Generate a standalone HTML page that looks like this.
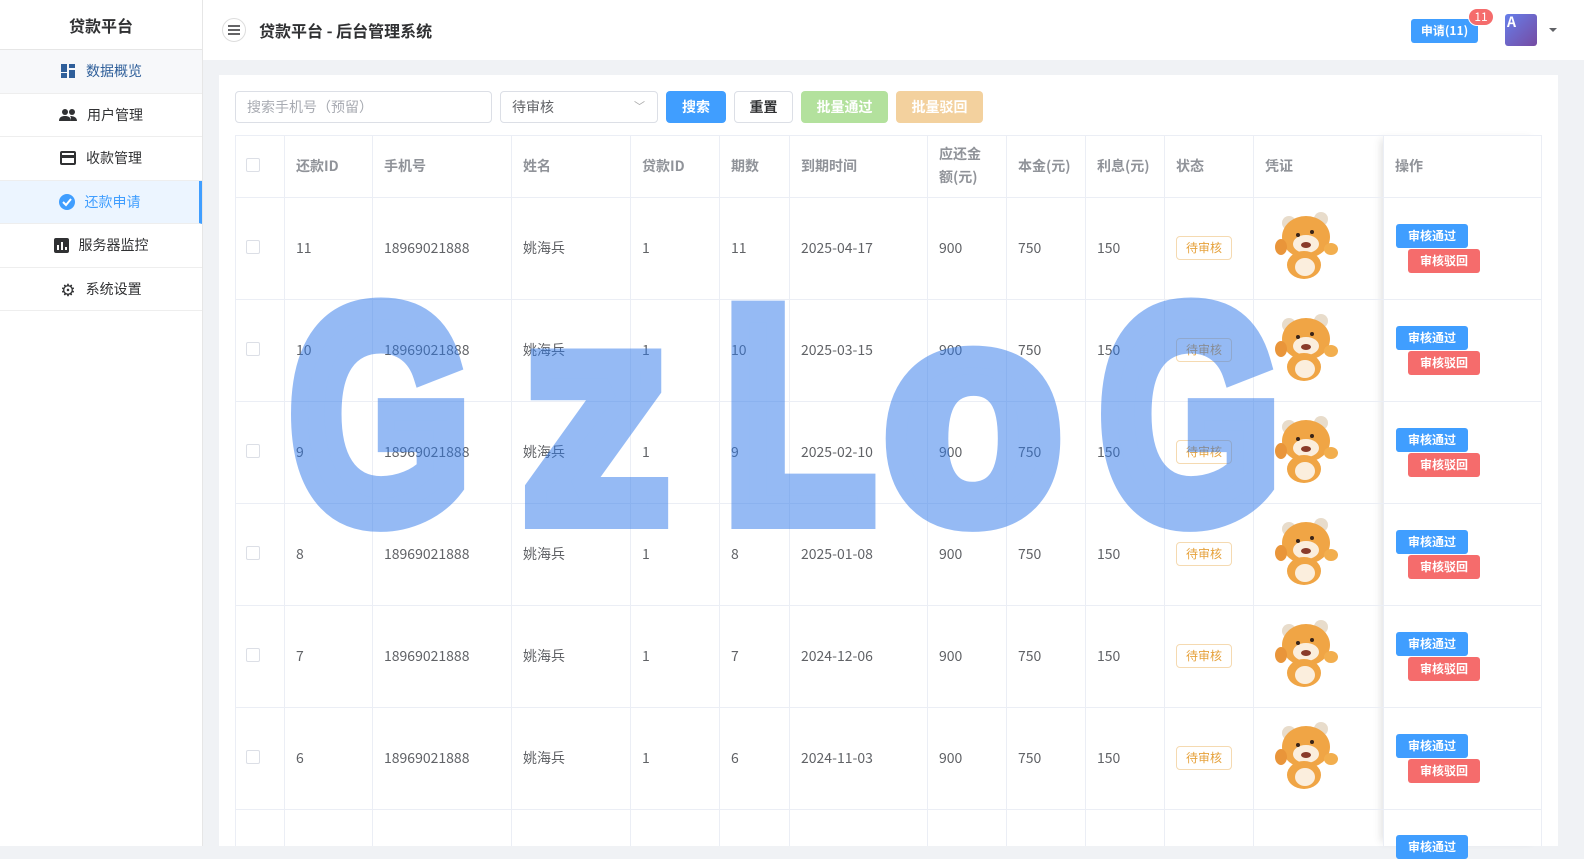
<!DOCTYPE html>
<html><head><meta charset="utf-8"><style>
*{box-sizing:border-box;margin:0;padding:0}
body{width:1584px;height:846px;overflow:hidden;font-family:"Noto Sans CJK SC","Liberation Sans",sans-serif;background:#f0f2f5;position:relative;color:#606266}
.abs{position:absolute}
#side{left:0;top:0;width:203px;height:846px;background:#fff;border-right:1px solid #e6e6e6}
#side .logo{height:50px;border-bottom:1px solid #e6e6e6;text-align:center;line-height:50px;font-size:16px;font-weight:bold;color:#303133}
.mi{height:43.5px;border-bottom:1px solid #eee;display:flex;align-items:center;justify-content:center;font-size:14px;color:#303133;gap:10px}
.mi.act{background:#ecf5ff;color:#409eff;border-right:3px solid #409eff}
#head{left:203px;top:0;width:1381px;height:60px;background:#fff}
#card{left:219px;top:75px;width:1339px;height:771px;background:#fff}
.inp{position:absolute;top:91px;height:32px;border:1px solid #dcdfe6;border-radius:4px;font-size:14px;line-height:30px;padding-left:11px}
.btn{position:absolute;top:91px;height:32px;border-radius:4px;font-size:14px;line-height:32px;text-align:center;color:#fff;font-weight:bold}
.cell{position:absolute;font-size:14px;display:flex;align-items:center;padding-left:12px}
.hl{position:absolute;background:#ebeef5}
.tag{border:1px solid #f5dab1;color:#e6a23c;font-size:12px;border-radius:4px;height:24px;line-height:22px;padding:0 9px;background:#fff}
.ok,.no{position:absolute;width:72px;height:24px;border-radius:3px;color:#fff;font-size:12px;font-weight:bold;text-align:center;line-height:24px}
.ok{background:#409eff}.no{background:#f56c6c}
.cb{position:absolute;width:14px;height:14px;border:1px solid #dcdfe6;border-radius:2px;background:#fff}
</style></head><body>
<div id="side" class="abs">
<div class="logo">贷款平台</div>
<div class="mi" style="background:#f7f8fa"><svg width="16" height="16"><rect x="1" y="1" width="6" height="8" fill="#2f5f9a"/><rect x="9" y="1" width="6" height="4" fill="#2f5f9a"/><rect x="1" y="10" width="6" height="5" fill="#2f5f9a"/><rect x="9" y="7" width="6" height="8" fill="#2f5f9a"/></svg><span style="color:#2f5f9a">数据概览</span></div>
<div class="mi"><svg width="18" height="14"><circle cx="6" cy="4" r="3" fill="#303133"/><circle cx="13" cy="4" r="3" fill="#303133"/><path d="M0 13c0-4 3-5 6-5s6 1 6 5zM12 13c0-3 0-4-1-5 3 0 7 1 7 5z" fill="#303133"/></svg>用户管理</div>
<div class="mi"><svg width="16" height="14"><rect x="1" y="1" width="14" height="12" rx="1" fill="none" stroke="#303133" stroke-width="2"/><rect x="1" y="4" width="14" height="3" fill="#303133"/></svg>收款管理</div>
<div class="mi act"><svg width="16" height="16"><circle cx="8" cy="8" r="8" fill="#409eff"/><path d="M4 8l3 3 5-6" stroke="#fff" stroke-width="2" fill="none"/></svg>还款申请</div>
<div class="mi"><svg width="15" height="15"><rect width="15" height="15" rx="2" fill="#303133"/><rect x="3" y="7" width="2" height="5" fill="#fff"/><rect x="7" y="4" width="2" height="8" fill="#fff"/><rect x="11" y="9" width="2" height="3" fill="#fff"/></svg>服务器监控</div>
<div class="mi"><span style="font-size:17px;color:#303133">⚙</span>系统设置</div>
</div>
<div id="head" class="abs">
<div class="abs" style="left:19px;top:18px;width:24px;height:24px;border:1px solid #ddd;border-radius:50%"><svg width="24" height="24" style="position:absolute;left:-1px;top:-1px"><path d="M6 8h12M6 12h12M6 16h12" stroke="#303133" stroke-width="1.5"/></svg></div>
<div class="abs" style="left:56px;top:18px;font-size:16px;font-weight:bold;color:#303133">贷款平台 - 后台管理系统</div>
<div class="abs" style="left:1208px;top:19px;width:67px;height:24px;background:#409eff;border-radius:3px;color:#fff;font-size:12px;line-height:24px;text-align:center;font-weight:bold">申请(11)</div>
<div class="abs" style="left:1265px;top:8px;width:26px;height:18px;background:#f56c6c;border-radius:9px;border:1px solid #fff;color:#fff;font-size:12px;line-height:16px;text-align:center">11</div>
<div class="abs" style="left:1302px;top:14px;width:32px;height:32px;border-radius:3px;background:linear-gradient(135deg,#667eea,#764ba2);color:#fff;font-size:14px;font-weight:bold;padding-left:2px;line-height:16px">A</div>
<div class="abs" style="left:1346px;top:28px;border:4px solid transparent;border-top:4px solid #606266"></div>
</div>
<div id="card" class="abs"></div>
<div class="inp" style="left:235px;width:257px;color:#a8abb2">搜索手机号（预留）</div>
<div class="inp" style="left:500px;width:158px;color:#606266">待审核<span style="position:absolute;right:12px;top:-1px;color:#aaa;font-size:11px">﹀</span></div>
<div class="btn" style="left:666px;width:60px;background:#409eff">搜索</div>
<div class="btn" style="left:734px;width:59px;background:#fff;border:1px solid #dcdfe6;color:#303133;line-height:30px">重置</div>
<div class="btn" style="left:801px;width:87px;background:#b3e19d">批量通过</div>
<div class="btn" style="left:896px;width:87px;background:#f3d19e">批量驳回</div>
<div id="tbl"></div>
<script>
var cols=[235,284,372,511,630,719,789,927,1006,1085,1164,1253,1383,1541];
var h='';
h+='<div class="abs" style="left:1383px;top:135px;width:158px;height:711px;background:#fff;box-shadow:-6px 0 8px -4px rgba(0,0,0,.12)"></div>';
h+='<div class="hl" style="left:235px;top:135px;width:1306px;height:1px"></div>';
cols.forEach(function(x){h+='<div class="hl" style="left:'+x+'px;top:135px;width:1px;height:711px"></div>';});
var heads=['','还款ID','手机号','姓名','贷款ID','期数','到期时间','应还金<br>额(元)','本金(元)','利息(元)','状态','凭证','操作'];
for(var i=1;i<heads.length;i++){h+='<div class="cell" style="left:'+cols[i]+'px;top:135px;width:'+(cols[i+1]-cols[i])+'px;height:62px;font-weight:bold;color:#909399;line-height:23px">'+heads[i]+'</div>';}
h+='<div class="cb" style="left:246px;top:158px"></div>';
var ids=[11,10,9,8,7,6],dates=['2025-04-17','2025-03-15','2025-02-10','2025-01-08','2024-12-06','2024-11-03'];
for(var r=0;r<7;r++){var y=197+r*102;
h+='<div class="hl" style="left:235px;top:'+y+'px;width:1306px;height:1px"></div>';
if(r==6)break;
h+='<div class="cb" style="left:246px;top:'+(y+43)+'px"></div>';
var v=[ids[r],'18969021888','姚海兵','1',ids[r],dates[r],'900','750','150'];
for(var c=0;c<v.length;c++){h+='<div class="cell" style="left:'+cols[c+1]+'px;top:'+y+'px;width:'+(cols[c+2]-cols[c+1])+'px;height:102px;color:#606266">'+v[c]+'</div>';}
h+='<div class="cell" style="left:1164px;top:'+y+'px;height:102px"><span class="tag">待审核</span></div>';
h+='<svg class="abs" style="left:1271px;top:'+(y+10)+'px" width="70" height="75"><circle cx="18" cy="16" r="7" fill="#e8dccb"/><circle cx="50" cy="12" r="7" fill="#e8dccb"/><ellipse cx="35" cy="30" rx="24" ry="21" fill="#f0a545"/><ellipse cx="35" cy="37" rx="13" ry="9" fill="#fbeedd"/><ellipse cx="33" cy="58" rx="17" ry="14" fill="#f0a545"/><ellipse cx="34" cy="60" rx="10" ry="9" fill="#fbeedd"/><ellipse cx="60" cy="42" rx="7" ry="6" fill="#f2ae4e"/><ellipse cx="10" cy="40" rx="6" ry="8" fill="#e9953a"/><circle cx="27" cy="28" r="2" fill="#3a2418"/><circle cx="41" cy="25" r="2" fill="#3a2418"/><ellipse cx="35" cy="38" rx="5" ry="3" fill="#8a3b2a"/></svg>';
h+='<div class="ok" style="left:1396px;top:'+(y+27)+'px">审核通过</div><div class="no" style="left:1408px;top:'+(y+52)+'px">审核驳回</div>';
}
h+='<div class="ok" style="left:1396px;top:835px">审核通过</div>';
document.getElementById('tbl').innerHTML=h;
</script>
<svg class="abs" style="left:0;top:0" width="1584" height="846">
<g opacity="0.5" fill="#2d78eb" stroke="#2d78eb" stroke-width="22" stroke-linejoin="miter" stroke-miterlimit="2" font-family="Liberation Sans" font-weight="bold" font-size="300">
<text x="290" y="518" textLength="180" lengthAdjust="spacingAndGlyphs">G</text>
<text x="524" y="518" textLength="144" lengthAdjust="spacingAndGlyphs">z</text>
<text x="724" y="518" textLength="150" lengthAdjust="spacingAndGlyphs">L</text>
<text x="885" y="518" textLength="176" lengthAdjust="spacingAndGlyphs">o</text>
<text x="1100" y="518" textLength="180" lengthAdjust="spacingAndGlyphs">G</text>
</g></svg>
</body></html>
